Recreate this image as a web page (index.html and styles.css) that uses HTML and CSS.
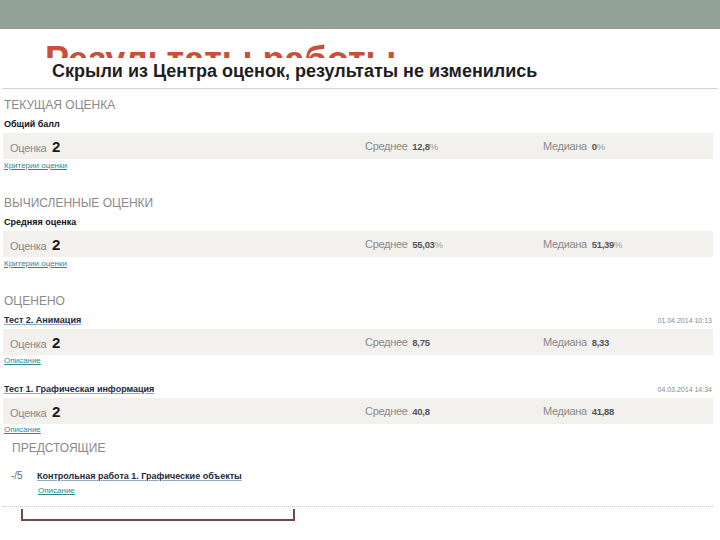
FILE: index.html
```html
<!DOCTYPE html>
<html>
<head>
  <meta charset="utf-8">
  <link rel="stylesheet" href="styles.css">
</head>
<body>
  <div class="slide">
    <div class="topbar"></div>
    <!-- заголовок слайда прикрыт скриншотом, видна только верхушка -->
    <div class="title-clip">
      <h1 class="title">Результаты работы</h1>
    </div>

    <div class="shot">
      <div class="note">Скрыли из Центра оценок, результаты не изменились</div>

      <div class="report">
        <div class="section first">
          <div class="heading">ТЕКУЩАЯ ОЦЕНКА</div>
          <div class="label">Общий балл</div>
          <div class="bar">
            <div class="cell">Оценка <b class="grade">2</b></div>
            <div class="cell">Среднее <b class="val">12,8<span>%</span></b></div>
            <div class="cell">Медиана <b class="val">0<span>%</span></b></div>
          </div>
          <a class="link" href="#">Критерии оценки</a>
        </div>

        <div class="section">
          <div class="heading">ВЫЧИСЛЕННЫЕ ОЦЕНКИ</div>
          <div class="label">Средняя оценка</div>
          <div class="bar">
            <div class="cell">Оценка <b class="grade">2</b></div>
            <div class="cell">Среднее <b class="val">55,03<span>%</span></b></div>
            <div class="cell">Медиана <b class="val">51,39<span>%</span></b></div>
          </div>
          <a class="link" href="#">Критерии оценки</a>
        </div>

        <div class="section">
          <div class="heading">ОЦЕНЕНО</div>
          <div class="item">
            <div class="item-head">
              <a class="test" href="#">Тест 2. Анимация</a>
              <span class="date">01.04.2014 10:13</span>
            </div>
            <div class="bar">
              <div class="cell">Оценка <b class="grade">2</b></div>
              <div class="cell">Среднее <b class="val">8,75</b></div>
              <div class="cell">Медиана <b class="val">8,33</b></div>
            </div>
            <a class="link" href="#">Описание</a>
          </div>
          <div class="item second">
            <div class="item-head">
              <a class="test" href="#">Тест 1. Графическая информация</a>
              <span class="date">04.03.2014 14:34</span>
            </div>
            <div class="bar">
              <div class="cell">Оценка <b class="grade">2</b></div>
              <div class="cell">Среднее <b class="val">40,8</b></div>
              <div class="cell">Медиана <b class="val">41,88</b></div>
            </div>
            <a class="link" href="#">Описание</a>
          </div>
        </div>

        <div class="upcoming">
          <div class="heading">ПРЕДСТОЯЩИЕ</div>
          <div class="todo">
            <span class="score">-/5</span>
            <div>
              <a class="test" href="#">Контрольная работа 1. Графические объекты</a>
              <a class="link" href="#">Описание</a>
            </div>
          </div>
        </div>
      </div>

      <div class="bracket"></div>
    </div>
  </div>
</body>
</html>
```

FILE: styles.css
```css
body {
  margin: 0;
  font-family: "Liberation Sans", Arial, sans-serif;
}
.slide {
  width: 720px;
  height: 540px;
  overflow: hidden;
  background: #fff;
}
.topbar {
  height: 29px;
  background-color: #92a297;
}
.title-clip {
  height: 29px;
  overflow: hidden;
}
.title {
  margin: 0;
  padding: 11px 0 0 45px;
  font-size: 36px;
  line-height: 40px;
  font-weight: bold;
  color: #c8503a;
}
.note {
  height: 30px;
  margin: 0 2px;
  padding-left: 50px;
  border-bottom: 1px solid #d4d4d4;
  font-size: 18px;
  line-height: 26px;
  font-weight: bold;
  color: #1e1e1e;
}
.report {
  padding: 0 7px 0 3px;
}
.section {
  margin-top: 21px;
}
.section.first {
  margin-top: 6px;
}
.heading {
  font-size: 12px;
  line-height: 20px;
  color: #8a8a8a;
  padding-left: 1px;
}
.label {
  margin-top: 2px;
  padding-left: 1px;
  font-size: 9px;
  line-height: 14px;
  font-weight: bold;
  color: #111;
}
.bar {
  display: grid;
  grid-template-columns: 355px 178px 1fr;
  align-items: center;
  height: 26px;
  margin-top: 2px;
  padding-left: 7px;
  background-color: #f3f1ee;
}
.cell {
  font-size: 11px;
  letter-spacing: -0.3px;
  color: #8a8a8a;
}
.grade {
  margin-left: 3px;
  font-size: 15px;
  color: #1a1a1a;
}
.val {
  margin-left: 2px;
  font-size: 9.5px;
  color: #555;
}
.val span {
  font-weight: normal;
  color: #999;
}
.link {
  display: block;
  margin-top: 1px;
  padding-left: 1px;
  font-size: 8px;
  line-height: 12px;
  color: #2f8794;
  text-decoration: underline;
}
.item .link {
  line-height: 10px;
}
.item.second {
  margin-top: 16px;
}
.item-head {
  display: flex;
  justify-content: space-between;
  align-items: center;
  height: 14px;
  margin-top: 2px;
  padding-left: 1px;
}
.test {
  font-size: 9px;
  font-weight: bold;
  color: #1c2a40;
  text-decoration: underline;
  text-decoration-color: #8eaac4;
}
.date {
  font-size: 7px;
  color: #8a8a8a;
  padding-right: 1px;
}
.upcoming {
  margin-top: 3px;
  padding-left: 8px;
  padding-bottom: 10px;
  border-bottom: 1px dotted #c8c8c8;
}
.todo {
  display: flex;
  margin-top: 11px;
}
.score {
  width: 26px;
  font-size: 10px;
  line-height: 14px;
  color: #666;
}
.todo .test {
  display: block;
  line-height: 14px;
}
.todo .link {
  margin-top: 3px;
  line-height: 10px;
}
.bracket {
  width: 270px;
  height: 10px;
  margin: 2px 0 0 21px;
  border: 2px solid #6e4a48;
  border-top: none;
}
```
